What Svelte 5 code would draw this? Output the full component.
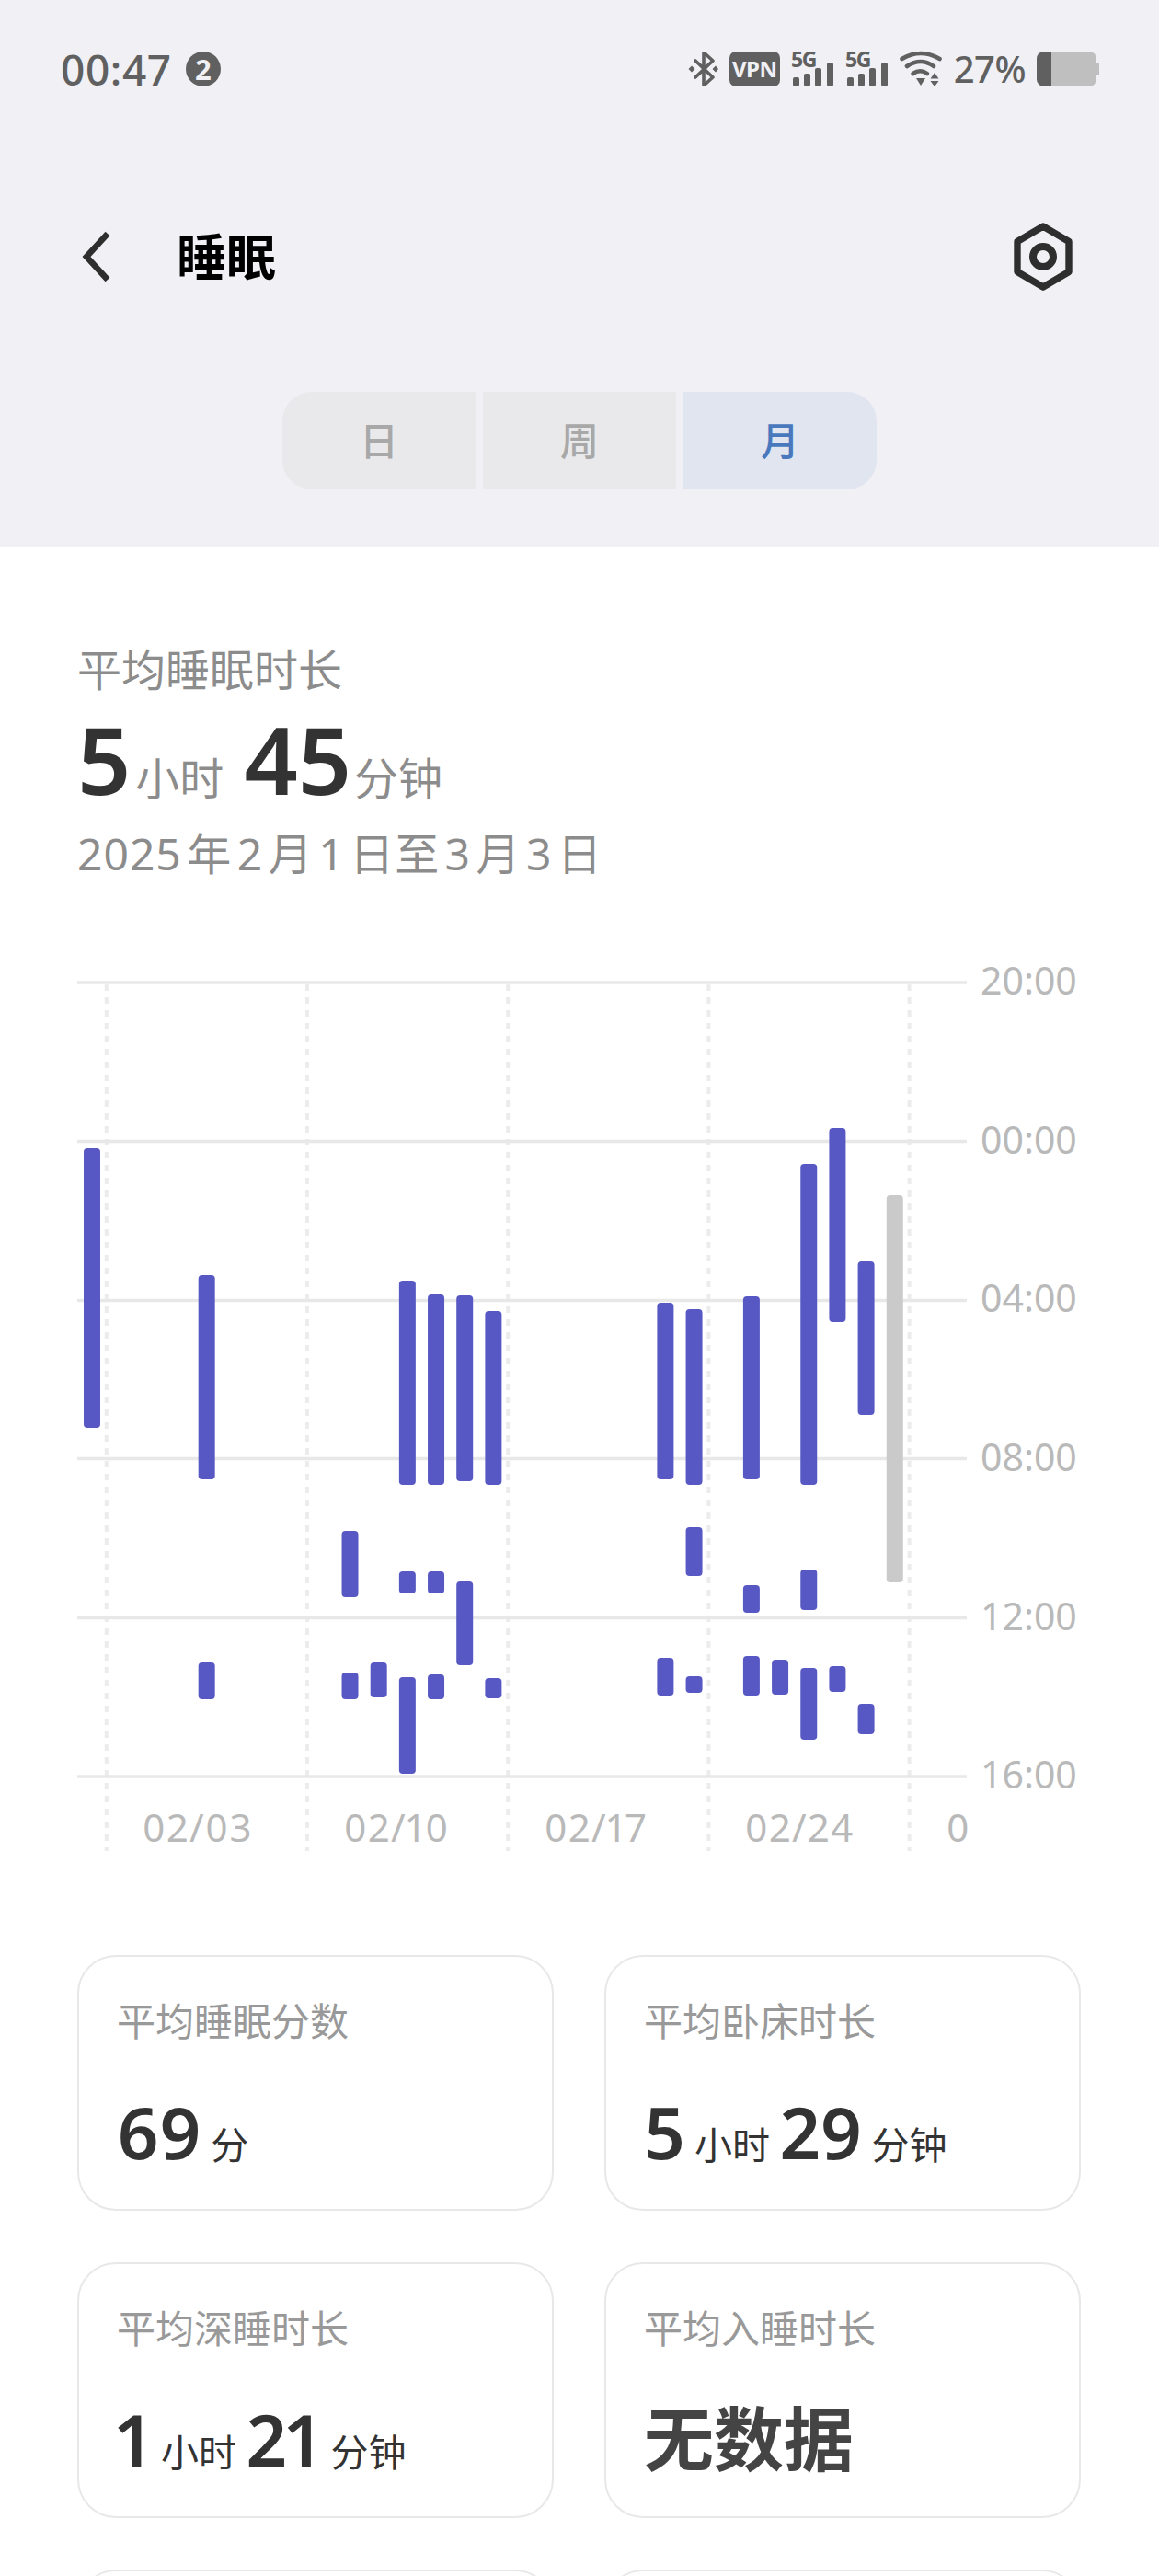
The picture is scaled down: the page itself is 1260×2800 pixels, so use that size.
<script lang="ts">
  const SANS = `"Noto Sans", "Noto Sans CJK SC", sans-serif`

  // chart x position of a day column
  const day_x = (i: number) => 100 + i * 31.17

  // [day index, top, bottom] in page px
  const bars = [
    [0, 1248, 1552], [4, 1386, 1608], [11, 1392, 1614], [12, 1407, 1614], [13, 1408, 1610],
    [14, 1425, 1614], [20, 1416, 1608], [21, 1423, 1614], [23, 1409, 1608], [25, 1265, 1614],
    [26, 1226, 1437], [27, 1371, 1538],
    [9, 1664, 1736], [11, 1708, 1732], [12, 1708, 1732], [13, 1719, 1810], [21, 1660, 1713],
    [23, 1723, 1753], [25, 1706, 1750],
    [4, 1807, 1847], [9, 1818, 1847], [10, 1807, 1845], [11, 1823, 1928], [12, 1820, 1847],
    [14, 1824, 1846], [20, 1802, 1843], [21, 1822, 1840], [23, 1800, 1843], [24, 1804, 1842],
    [25, 1813, 1891], [26, 1811, 1839], [27, 1852, 1885],
  ]
  const grid = [
    [1068, `20:00`], [1240.6, `00:00`], [1413.4, `04:00`],
    [1585.6, `08:00`], [1758.6, `12:00`], [1931, `16:00`],
  ]
  const weeks = [115.8, 334, 552.2, 770.4, 988.6]
  const dates = [[155, `02/03`], [374, `02/10`], [592, `02/17`], [810, `02/24`], [1029, `0`]]
  const tabs = [`日`, `周`, `月`]

  const cards = [
    { label: `平均睡眠分数`, parts: [[`69`, `分`]] },
    { label: `平均卧床时长`, parts: [[`5`, `小时`], [`29`, `分钟`]] },
    { label: `平均深睡时长`, parts: [[`1`, `小时`], [`21`, `分钟`]] },
    { label: `平均入睡时长`, none: `无数据` },
  ]
</script>

<div class="page" style="font-family: {SANS}">
  <header>
    <div class="status">
      <span class="time">00:47</span>
      <span class="count">2</span>
      <div class="status-right">
        <svg class="bt" width="33" height="38" viewBox="0 0 33 38">
          <path d="M8 10 L27 28 L17 37 V1 L27 10 L8 28" fill="none" stroke="#606060" stroke-width="3.6" stroke-linejoin="round" stroke-linecap="round" />
          <path d="M4 15.5 L7.5 19 L4 22.5 L0.5 19 Z M30 15.5 L33 19 L30 22.5 L26.5 19 Z" fill="#606060" />
        </svg>
        <span class="vpn">VPN</span>
        {#each [0, 1] as s}
          <svg class="sig" width="47" height="54" viewBox="0 -8 47 54">
            <text x="0" y="17" class="five">5G</text>
            <rect x="2" y="28" width="7" height="10" rx="2" fill="#606060" />
            <rect x="14" y="24" width="7" height="14" rx="2" fill="#606060" />
            <rect x="26" y="18" width="7" height="20" rx="2" fill="#606060" />
            <rect x="39" y="12" width="7" height="26" rx="2" fill="#606060" />
          </svg>
        {/each}
        <svg class="wifi" width="47" height="40" viewBox="0 0 47 40">
          <g fill="none" stroke="#606060" stroke-width="4.6" stroke-linecap="round">
            <path d="M2.5 9 Q23 -3 43.5 9" />
            <path d="M8 17 Q23 7 37 17" />
            <path d="M14.5 25 Q22.5 19.5 30 25" />
          </g>
          <path d="M18 30 H28 L23 38 Z" fill="#606060" />
          <path d="M38 24 L42.5 30.5 H33.5 Z M33.5 33 H42.5 L38 39 Z" fill="#606060" />
        </svg>
        <span class="pct">27%</span>
        <svg class="batt" width="68" height="38" viewBox="0 0 68 38">
          <rect x="0" y="0" width="65" height="38" rx="8" fill="#bfbfbf" />
          <path d="M8 0 H16 V38 H8 A8 8 0 0 1 0 30 V8 A8 8 0 0 1 8 0 Z" fill="#606060" />
          <rect x="65" y="12" width="3" height="14" rx="1.5" fill="#bfbfbf" />
        </svg>
      </div>
    </div>

    <div class="nav">
      <svg class="back" width="34" height="58" viewBox="0 0 34 58">
        <path d="M29 4 L6 29 L29 54" fill="none" stroke="#2e2e2e" stroke-width="6.6" />
      </svg>
      <h1>睡眠</h1>
      <svg class="gear" width="66" height="74" viewBox="0 0 66 74">
        <path d="M33 4 L61 20.5 V53.5 L33 70 L5 53.5 V20.5 Z" fill="none" stroke="#2e2e2e" stroke-width="7.4" stroke-linejoin="round" />
        <circle cx="33" cy="37" r="11" fill="none" stroke="#2e2e2e" stroke-width="8" />
      </svg>
    </div>

    <div class="tabs">
      {#each tabs as tab, i}
        <div class="tab" class:active={i === 2}>{tab}</div>
      {/each}
    </div>
  </header>

  <section class="summary">
    <div class="sum-label">平均睡眠时长</div>
    <div class="sum-value">
      <b>5</b><span class="unit">小时</span><b class="second">45</b><span class="unit tight">分钟</span>
    </div>
    <div class="sum-date">2025 年 2 月 1 日至 3 月 3 日</div>
  </section>

  <svg class="chart" width="1260" height="990" viewBox="0 1030 1260 990">
    {#each weeks as x}
      <line x1={x} x2={x} y1="1070" y2="2012" class="week" />
    {/each}
    {#each grid as [y, label]}
      <line x1="84" x2="1051" y1={y} y2={y} class="hline" />
      <text x="1066" y={Number(y) + 13} class="axis">{label}</text>
    {/each}
    {#each bars as [i, top, bottom]}
      <rect x={day_x(i) - 9} y={top} width="18" height={bottom - top} rx="4" fill="#5858c4" />
    {/each}
    <rect x={day_x(28) - 9} y="1299" width="18" height="421" rx="4" fill="#cacaca" />
    {#each dates as [x, label]}
      <text {x} y="2002" class="axis date">{label}</text>
    {/each}
  </svg>

  <div class="cards">
    {#each cards as card}
      <div class="card">
        <div class="card-label">{card.label}</div>
        {#if card.none}
          <div class="card-none">{card.none}</div>
        {:else}
          <div class="card-value">
            {#each card.parts as [num, unit]}
              <b>{num}</b><span>{unit}</span>
            {/each}
          </div>
        {/if}
      </div>
    {/each}
    <div class="card"></div>
    <div class="card"></div>
  </div>
</div>

<style>
  :global(body) {
    margin: 0;
    background: #fff;
  }
  .page {
    width: 1260px;
    height: 2800px;
    overflow: hidden;
  }
  header {
    height: 595px;
    background: #f0f0f5;
    box-sizing: border-box;
    padding-top: 55px;
  }
  .status {
    display: flex;
    align-items: center;
    height: 40px;
    padding: 0 65px 0 66px;
    color: #606060;
  }
  .time {
    font-size: 46px;
    line-height: 40px;
    font-weight: 500;
    letter-spacing: 0.6px;
  }
  .count {
    width: 38px;
    height: 38px;
    margin-left: 15px;
    border-radius: 50%;
    background: #606060;
    color: #f0f0f5;
    font-size: 31px;
    font-weight: 700;
    line-height: 38px;
    text-align: center;
  }
  .status-right {
    margin-left: auto;
    display: flex;
    align-items: center;
    gap: 12px;
  }
  .vpn {
    width: 55px;
    height: 38px;
    border-radius: 7px;
    background: #606060;
    color: #f0f0f5;
    font-size: 24px;
    font-weight: 700;
    line-height: 38px;
    text-align: center;
    letter-spacing: -0.5px;
  }
  .five {
    font-size: 23px;
    font-weight: 700;
    fill: #606060;
    letter-spacing: -1.5px;
  }
  .pct {
    font-size: 40px;
    line-height: 40px;
    font-weight: 500;
    letter-spacing: -0.5px;
  }
  .nav {
    display: flex;
    align-items: center;
    height: 74px;
    margin-top: 147px;
    padding: 0 93px 0 88px;
  }
  h1 {
    margin: 0 0 0 70px;
    font-size: 54px;
    line-height: 74px;
    font-weight: 700;
    color: #000;
  }
  .gear {
    margin-left: auto;
  }
  .tabs {
    display: flex;
    justify-content: center;
    gap: 8px;
    margin-top: 110px;
  }
  .tab {
    width: 210px;
    height: 106px;
    background: #e9e9eb;
    color: #a8a8a8;
    font-size: 42px;
    font-weight: 500;
    line-height: 106px;
    text-align: center;
  }
  .tab:first-child {
    border-radius: 32px 0 0 32px;
  }
  .tab:last-child {
    border-radius: 0 32px 32px 0;
  }
  .tab.active {
    background: #e0e5ef;
    color: #4a78bd;
  }
  .summary {
    height: 435px;
    box-sizing: border-box;
    padding: 103px 0 0 84px;
    color: #8c8c8c;
    font-size: 48px;
  }
  .sum-label {
    line-height: 60px;
  }
  .sum-value {
    display: flex;
    align-items: baseline;
    height: 112px;
    margin-top: 11px;
    line-height: 112px;
  }
  .sum-value b {
    font-size: 102px;
    font-weight: 600;
    color: #333;
  }
  .sum-value .unit {
    margin-left: 5px;
  }
  .sum-value .second {
    margin-left: 22px;
  }
  .sum-value .tight {
    margin-left: 3px;
  }
  .sum-date {
    line-height: 60px;
    margin-top: 17px;
    letter-spacing: 1px;
    word-spacing: -8px;
  }
  .chart {
    display: block;
  }
  .week {
    stroke: #ececec;
    stroke-width: 4;
    stroke-dasharray: 7 7;
  }
  .hline {
    stroke: #e8e8e8;
    stroke-width: 3.5;
  }
  .axis {
    font-size: 41px;
    fill: #b9b9b9;
  }
  .date {
    font-size: 42px;
    letter-spacing: 1.6px;
    font-variant-numeric: proportional-nums;
  }
  .cards {
    display: grid;
    grid-template-columns: 518px 518px;
    gap: 56px 55px;
    margin: 105px 0 0 84px;
  }
  .card {
    height: 278px;
    box-sizing: border-box;
    padding: 42px 0 0 41px;
    border: 2px solid #e8e8e8;
    border-radius: 42px;
  }
  .card-label {
    color: #999;
    font-size: 42px;
    line-height: 56px;
  }
  .card-value {
    display: flex;
    align-items: baseline;
    margin-top: 42px;
    height: 100px;
    line-height: 100px;
    color: #333;
  }
  .card-value b {
    font-size: 78px;
    font-weight: 600;
    font-variant-numeric: proportional-nums;
  }
  .card-value span {
    margin: 0 11px 0 10px;
    font-size: 41px;
  }
  .card-none {
    margin-top: 42px;
    color: #444;
    font-size: 76px;
    font-weight: 600;
    line-height: 100px;
  }
</style>
